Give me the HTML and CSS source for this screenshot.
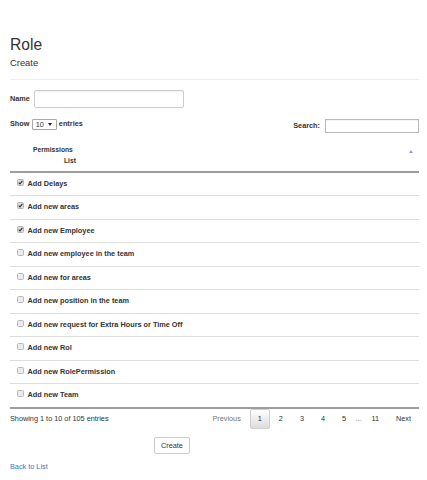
FILE: index.html
```html
<!DOCTYPE html>
<html lang="en">
<head>
<meta charset="utf-8">
<title>Role - Create</title>
<link rel="stylesheet" href="styles.css">
</head>
<body>
<div class="page">
  <h2 class="title">Role</h2>
  <h4 class="subtitle">Create</h4>
  <hr class="rule">

  <div class="field">
    <label class="field-label" for="name">Name</label>
    <input class="text-input" id="name" type="text">
  </div>

  <div class="dt-top">
    <div class="length">
      <span class="lbl">Show</span>
      <span class="select">10<svg class="caret" width="4" height="3" viewBox="0 0 4 3"><path d="M0 0H4L2 3Z" fill="#222"/></svg></span>
      <span class="lbl">entries</span>
    </div>
    <div class="filter">
      <span class="lbl">Search:</span>
      <input class="search-input" type="search">
    </div>
  </div>

  <table class="perm-table">
    <thead>
      <tr>
        <th>
          <div class="th-inner">
            <span class="th-label"><span class="l1">Permissions</span><span class="l2">List</span></span>
            <svg class="sort" width="4" height="3" viewBox="0 0 4 3"><path d="M2 0L4 3H0Z" fill="#8f96e3"/></svg>
          </div>
        </th>
      </tr>
    </thead>
    <tbody>
      <tr><td><svg class="cb" width="7" height="7" viewBox="0 0 7 7"><rect x="0.5" y="0.5" width="6" height="6" rx="1" fill="#dcdcdc" stroke="#b5b5b5"/><path d="M1.7 3.6L3 4.9L5.4 1.9" fill="none" stroke="#333" stroke-width="1.1"/></svg>Add Delays</td></tr>
      <tr><td><svg class="cb" width="7" height="7" viewBox="0 0 7 7"><rect x="0.5" y="0.5" width="6" height="6" rx="1" fill="#dcdcdc" stroke="#b5b5b5"/><path d="M1.7 3.6L3 4.9L5.4 1.9" fill="none" stroke="#333" stroke-width="1.1"/></svg>Add new areas</td></tr>
      <tr><td><svg class="cb" width="7" height="7" viewBox="0 0 7 7"><rect x="0.5" y="0.5" width="6" height="6" rx="1" fill="#dcdcdc" stroke="#b5b5b5"/><path d="M1.7 3.6L3 4.9L5.4 1.9" fill="none" stroke="#333" stroke-width="1.1"/></svg>Add new Employee</td></tr>
      <tr><td><svg class="cb" width="7" height="7" viewBox="0 0 7 7"><rect x="0.5" y="0.5" width="6" height="6" rx="1" fill="#ececec" stroke="#b8b8b8"/></svg>Add new employee in the team</td></tr>
      <tr><td><svg class="cb" width="7" height="7" viewBox="0 0 7 7"><rect x="0.5" y="0.5" width="6" height="6" rx="1" fill="#ececec" stroke="#b8b8b8"/></svg>Add new for areas</td></tr>
      <tr><td><svg class="cb" width="7" height="7" viewBox="0 0 7 7"><rect x="0.5" y="0.5" width="6" height="6" rx="1" fill="#ececec" stroke="#b8b8b8"/></svg>Add new position in the team</td></tr>
      <tr><td><svg class="cb" width="7" height="7" viewBox="0 0 7 7"><rect x="0.5" y="0.5" width="6" height="6" rx="1" fill="#ececec" stroke="#b8b8b8"/></svg>Add new request for Extra Hours or Time Off</td></tr>
      <tr><td><svg class="cb" width="7" height="7" viewBox="0 0 7 7"><rect x="0.5" y="0.5" width="6" height="6" rx="1" fill="#ececec" stroke="#b8b8b8"/></svg>Add new Rol</td></tr>
      <tr><td><svg class="cb" width="7" height="7" viewBox="0 0 7 7"><rect x="0.5" y="0.5" width="6" height="6" rx="1" fill="#ececec" stroke="#b8b8b8"/></svg>Add new RolePermission</td></tr>
      <tr><td><svg class="cb" width="7" height="7" viewBox="0 0 7 7"><rect x="0.5" y="0.5" width="6" height="6" rx="1" fill="#ececec" stroke="#b8b8b8"/></svg>Add new Team</td></tr>
    </tbody>
  </table>

  <div class="dt-bottom">
    <div class="info">Showing 1 to 10 of 105 entries</div>
    <div class="paginate">
      <span class="pg disabled">Previous</span>
      <span class="pg current">1</span>
      <span class="pg">2</span>
      <span class="pg">3</span>
      <span class="pg">4</span>
      <span class="pg">5</span>
      <span class="ellipsis">…</span>
      <span class="pg">11</span>
      <span class="pg">Next</span>
    </div>
  </div>

  <div class="actions">
    <button class="btn" type="button">Create</button>
  </div>

  <a class="back" href="#">Back to List</a>
</div>
</body>
</html>
```

FILE: styles.css
```css
html, body {
  margin: 0;
  padding: 0;
  background: #fff;
}

body {
  font-family: "Liberation Sans", Arial, Helvetica, sans-serif;
  font-size: 7.3px;
  line-height: 1.45;
  color: #333;
}

.page {
  padding: 36px 8px 0 10px;
}

.title {
  margin: 0;
  font-size: 15.6px;
  font-weight: 400;
  line-height: 1.1;
  color: #333;
}

.subtitle {
  margin: 4.4px 0 0;
  font-size: 9.4px;
  font-weight: 400;
  line-height: 1.1;
  color: #333;
}

.rule {
  margin: 11px 0 0;
  border: 0;
  border-top: 1px solid #eee;
  height: 0;
}

.field {
  margin-top: 10px;
  display: flex;
  align-items: center;
  gap: 4px;
}

.field-label {
  font-weight: 700;
}

.text-input {
  box-sizing: border-box;
  width: 150px;
  height: 18px;
  margin: 0;
  padding: 0 4px;
  border: 1px solid #ccc;
  border-radius: 2px;
  box-shadow: inset 0 1px 1px rgba(0, 0, 0, 0.06);
  font: inherit;
  outline: none;
}

.dt-top {
  margin-top: 11px;
  display: flex;
  justify-content: space-between;
  align-items: flex-start;
}

.lbl {
  font-weight: 700;
}

.length {
  display: flex;
  align-items: center;
  gap: 2.2px;
}

.select {
  box-sizing: border-box;
  width: 25px;
  height: 11.5px;
  border: 1px solid #a9a9a9;
  border-radius: 1px;
  background: #fff;
  display: flex;
  align-items: center;
  justify-content: space-between;
  padding: 0 4px 0 3px;
  font-weight: 400;
  line-height: 1;
}

.caret {
  display: block;
}

.filter {
  display: flex;
  align-items: center;
  gap: 5px;
}

.search-input {
  box-sizing: border-box;
  width: 94px;
  height: 14px;
  margin: 0;
  padding: 0 3px;
  border: 1px solid #bbb;
  border-radius: 0;
  box-shadow: inset 0 1px 1px rgba(0, 0, 0, 0.05);
  font: inherit;
  outline: none;
}

.perm-table {
  margin-top: 5px;
  width: 100%;
  border-collapse: separate;
  border-spacing: 0;
}

.perm-table th {
  padding: 6px 6px 5px 0;
  text-align: left;
  border-bottom: 2px solid #9d9d9d;
}

.th-inner {
  display: flex;
  justify-content: space-between;
  align-items: flex-start;
}

.th-label {
  display: block;
  padding-left: 23px;
  font-size: 6.7px;
  font-weight: 700;
  line-height: 11px;
}

.l1,
.l2 {
  display: block;
}

.l2 {
  padding-left: 31px;
}

.sort {
  display: block;
  margin-top: 6.5px;
}

.perm-table td {
  padding: 5px 0 6.5px 7px;
  line-height: 11px;
  font-weight: 700;
  border-bottom: 1px solid #ddd;
}

.perm-table tr:last-child td {
  border-bottom: 2px solid #9d9d9d;
}

.cb {
  display: inline-block;
  vertical-align: 0;
  margin-right: 3.6px;
}

.dt-bottom {
  display: flex;
  justify-content: space-between;
  align-items: center;
  height: 20px;
}

.info {
  color: #333;
}

.paginate {
  display: flex;
  align-items: center;
}

.pg {
  box-sizing: border-box;
  height: 20px;
  line-height: 18px;
  padding: 0 7px;
  margin-left: 1px;
  border: 1px solid transparent;
  border-radius: 2px;
  color: #333;
}

.pg.disabled {
  color: #777;
}

.pg.current {
  border-color: #d0d0d0;
  background: linear-gradient(to bottom, #fff 0%, #dcdcdc 100%);
}

.ellipsis {
  padding: 0 0 0 1px;
  color: #777;
}

.actions {
  margin-top: 8px;
  padding-left: 144px;
}

.btn {
  box-sizing: border-box;
  height: 17px;
  margin: 0;
  padding: 0 6px;
  border: 1px solid #ccc;
  border-radius: 2px;
  background: #fff;
  color: #333;
  font: inherit;
  line-height: 1;
}

.back {
  display: inline-block;
  margin-top: 8px;
  color: #337ab7;
  text-decoration: none;
}
```
